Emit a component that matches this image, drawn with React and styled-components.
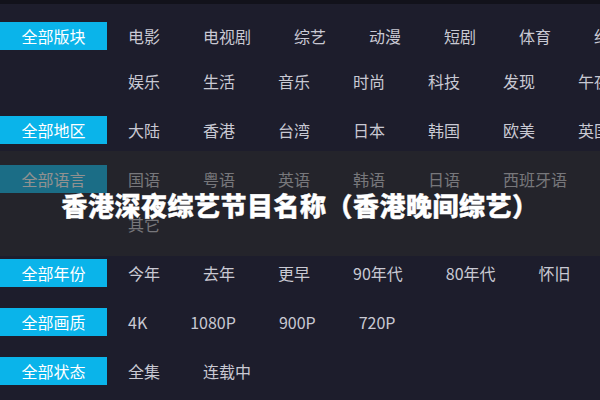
import React from "react";
import styled, { createGlobalStyle } from "styled-components";

const GlobalStyle = createGlobalStyle`
  html, body {
    margin: 0;
    padding: 0;
    background: #1d1d2c;
  }
  body {
    font-family: "Noto Sans CJK SC", "Noto Sans", sans-serif;
  }
`;

const Page = styled.div`
  position: relative;
  width: 600px;
  height: 400px;
  box-sizing: border-box;
  border-top: 4px solid #12121b;
  padding-top: 18px;
  background: #1d1d2c;
  overflow: hidden;
`;

const FilterList = styled.div`
  display: flex;
  flex-direction: column;
  gap: 21px;
`;

const Group = styled.div`
  display: flex;
  align-items: flex-start;
`;

const Label = styled.div`
  flex-shrink: 0;
  width: 107px;
  height: 28px;
  line-height: 28px;
  background: #0ab4ea;
  color: #ffffff;
  font-size: 16px;
  text-align: center;
`;

const Lines = styled.div`
  display: flex;
  flex-direction: column;
  gap: 17px;
  margin-left: 21px;
`;

const Line = styled.div`
  display: flex;
  gap: 43px;
  height: 28px;
  line-height: 28px;
  white-space: nowrap;
`;

const Item = styled.span`
  color: #c9c9d3;
  font-size: 16px;
  cursor: pointer;
`;

const Caption = styled.div`
  position: absolute;
  left: 0;
  right: 0;
  top: 147px;
  height: 105px;
  box-sizing: border-box;
  padding-top: 2px;
  display: flex;
  align-items: center;
  justify-content: center;
  background: rgba(44, 44, 42, 0.52);
`;

const Title = styled.h1`
  margin: 0;
  color: #ffffff;
  font-size: 26px;
  font-weight: 900;
  letter-spacing: 0.5px;
  -webkit-text-stroke: 0.4px #ffffff;
  white-space: nowrap;
`;

const groups = [
  {
    label: "全部版块",
    lines: [
      ["电影", "电视剧", "综艺", "动漫", "短剧", "体育", "纪录"],
      ["娱乐", "生活", "音乐", "时尚", "科技", "发现", "午夜"],
    ],
  },
  {
    label: "全部地区",
    lines: [["大陆", "香港", "台湾", "日本", "韩国", "欧美", "英国"]],
  },
  {
    label: "全部语言",
    lines: [
      ["国语", "粤语", "英语", "韩语", "日语", "西班牙语"],
      ["其它"],
    ],
  },
  {
    label: "全部年份",
    lines: [["今年", "去年", "更早", "90年代", "80年代", "怀旧"]],
  },
  {
    label: "全部画质",
    lines: [["4K", "1080P", "900P", "720P"]],
  },
  {
    label: "全部状态",
    lines: [["全集", "连载中"]],
  },
];

export default function App() {
  return (
    <>
      <GlobalStyle />
      <Page>
        <FilterList>
          {groups.map((group) => (
            <Group key={group.label}>
              <Label>{group.label}</Label>
              <Lines>
                {group.lines.map((line, i) => (
                  <Line key={i}>
                    {line.map((item) => (
                      <Item key={item}>{item}</Item>
                    ))}
                  </Line>
                ))}
              </Lines>
            </Group>
          ))}
        </FilterList>
        <Caption>
          <Title>香港深夜综艺节目名称（香港晚间综艺）</Title>
        </Caption>
      </Page>
    </>
  );
}
